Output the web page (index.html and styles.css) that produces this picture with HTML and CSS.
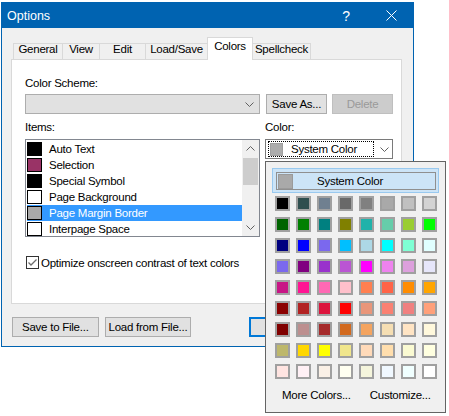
FILE: index.html
```html
<!DOCTYPE html>
<html>
<head>
<meta charset="utf-8">
<link rel="stylesheet" href="styles.css">
</head>
<body>
<div class="window">
  <div class="titlebar">
    <span class="title">Options</span>
    <span class="help">?</span>
    <svg class="close" width="11" height="11" viewBox="0 0 11 11"><path d="M0.5 0.5 L10.5 10.5 M10.5 0.5 L0.5 10.5" stroke="#fff" stroke-width="1" fill="none"/></svg>
  </div>
  <div class="client">
    <div class="tabs">
      <div class="tab tab-general">General</div>
      <div class="tab tab-view">View</div>
      <div class="tab tab-edit">Edit</div>
      <div class="tab tab-load">Load/Save</div>
      <div class="tab tab-colors selected">Colors</div>
      <div class="tab tab-spell">Spellcheck</div>
    </div>
    <div class="panel">
      <div class="lbl">Color Scheme:</div>
      <div class="scheme-row">
        <div class="combo"><svg class="chev" width="9" height="5" viewBox="0 0 9 5"><path d="M0.5 0.5 L4.5 4.5 L8.5 0.5" stroke="#606060" fill="none"/></svg></div>
        <div class="btn btn-saveas">Save As...</div>
        <div class="btn btn-disabled">Delete</div>
      </div>
      <div class="items-row">
        <div class="items-col">
          <div class="lbl">Items:</div>
          <div class="listbox">
            <div class="list">
              <div class="row"><span class="sw sw-black"></span><span>Auto Text</span></div>
              <div class="row"><span class="sw sw-sel"></span><span>Selection</span></div>
              <div class="row"><span class="sw sw-black"></span><span>Special Symbol</span></div>
              <div class="row"><span class="sw sw-white"></span><span>Page Background</span></div>
              <div class="row row-selected"><span class="sw sw-gray"></span><span>Page Margin Border</span></div>
              <div class="row"><span class="sw sw-white"></span><span>Interpage Space</span></div>
            </div>
            <div class="vscroll">
              <div class="arrow"><svg width="9" height="5" viewBox="0 0 9 5"><path d="M0.5 4.5 L4.5 0.5 L8.5 4.5" stroke="#606060" fill="none"/></svg></div>
              <div class="track"><div class="thumb"></div></div>
              <div class="arrow"><svg width="9" height="5" viewBox="0 0 9 5"><path d="M0.5 0.5 L4.5 4.5 L8.5 0.5" stroke="#606060" fill="none"/></svg></div>
            </div>
          </div>
        </div>
        <div class="color-col">
          <div class="lbl">Color:</div>
          <div class="color-combo">
            <div class="focus"><span class="csw"></span><span>System Color</span></div>
            <svg class="chev2" width="9" height="5" viewBox="0 0 9 5"><path d="M0.5 0.5 L4.5 4.5 L8.5 0.5" stroke="#606060" fill="none"/></svg>
          </div>
        </div>
      </div>
      <div class="check">
        <span class="box"><svg width="11" height="11" viewBox="0 0 11 11"><path d="M1.5 5.5 L4 8 L9.5 2.5" stroke="#6d6d6d" stroke-width="1.3" fill="none"/></svg></span>
        <span>Optimize onscreen contrast of text colors</span>
      </div>
    </div>
    <div class="footer">
      <div class="btn fbtn">Save to File...</div>
      <div class="btn fbtn fbtn2">Load from File...</div>
      <div class="btn fbtn ok">OK</div>
      <div class="btn fbtn cancel">Cancel</div>
    </div>
  </div>
</div>

<div class="popup">
  <div class="syscolor">
    <div class="syscolor-inner"><span class="psw"></span><span class="systext">System Color</span></div>
  </div>
  <div class="grid">
    <span class="c" style="background:#000000"></span>
    <span class="c" style="background:#2f4f4f"></span>
    <span class="c" style="background:#708090"></span>
    <span class="c" style="background:#696969"></span>
    <span class="c" style="background:#808080"></span>
    <span class="c" style="background:#a9a9a9"></span>
    <span class="c" style="background:#c0c0c0"></span>
    <span class="c" style="background:#d3d3d3"></span>

    <span class="c" style="background:#006400"></span>
    <span class="c" style="background:#008000"></span>
    <span class="c" style="background:#008080"></span>
    <span class="c" style="background:#808000"></span>
    <span class="c" style="background:#20b2aa"></span>
    <span class="c" style="background:#66cdaa"></span>
    <span class="c" style="background:#9acd32"></span>
    <span class="c" style="background:#00ff00"></span>

    <span class="c" style="background:#000080"></span>
    <span class="c" style="background:#0000ff"></span>
    <span class="c" style="background:#7b68ee"></span>
    <span class="c" style="background:#00bfff"></span>
    <span class="c" style="background:#add8e6"></span>
    <span class="c" style="background:#00ffff"></span>
    <span class="c" style="background:#7fffd4"></span>
    <span class="c" style="background:#e0ffff"></span>

    <span class="c" style="background:#7b68ee"></span>
    <span class="c" style="background:#800080"></span>
    <span class="c" style="background:#9932cc"></span>
    <span class="c" style="background:#ba55d3"></span>
    <span class="c" style="background:#ff00ff"></span>
    <span class="c" style="background:#ee82ee"></span>
    <span class="c" style="background:#dda0dd"></span>
    <span class="c" style="background:#e6e6fa"></span>

    <span class="c" style="background:#c71585"></span>
    <span class="c" style="background:#ff1493"></span>
    <span class="c" style="background:#ff69b4"></span>
    <span class="c" style="background:#ffc0cb"></span>
    <span class="c" style="background:#ff7f50"></span>
    <span class="c" style="background:#ff6347"></span>
    <span class="c" style="background:#ff8c00"></span>
    <span class="c" style="background:#ffa500"></span>

    <span class="c" style="background:#8b0000"></span>
    <span class="c" style="background:#b22222"></span>
    <span class="c" style="background:#dc143c"></span>
    <span class="c" style="background:#ff0000"></span>
    <span class="c" style="background:#e9967a"></span>
    <span class="c" style="background:#fa8072"></span>
    <span class="c" style="background:#f08080"></span>
    <span class="c" style="background:#ffa07a"></span>

    <span class="c" style="background:#800000"></span>
    <span class="c" style="background:#bc8f8f"></span>
    <span class="c" style="background:#a52a2a"></span>
    <span class="c" style="background:#d2691e"></span>
    <span class="c" style="background:#f4a460"></span>
    <span class="c" style="background:#f5deb3"></span>
    <span class="c" style="background:#ffe4c4"></span>
    <span class="c" style="background:#fff8dc"></span>

    <span class="c" style="background:#bdb76b"></span>
    <span class="c" style="background:#ffd700"></span>
    <span class="c" style="background:#ffff00"></span>
    <span class="c" style="background:#f0e68c"></span>
    <span class="c" style="background:#ffdab9"></span>
    <span class="c" style="background:#ffdead"></span>
    <span class="c" style="background:#fafad2"></span>
    <span class="c" style="background:#ffffe0"></span>

    <span class="c" style="background:#ffe4e1"></span>
    <span class="c" style="background:#fff0f5"></span>
    <span class="c" style="background:#faf0e6"></span>
    <span class="c" style="background:#fffff0"></span>
    <span class="c" style="background:#f5f5dc"></span>
    <span class="c" style="background:#f0f8ff"></span>
    <span class="c" style="background:#f0ffff"></span>
    <span class="c" style="background:#ffffff"></span>
  </div>
  <div class="links">
    <span class="more">More Colors...</span>
    <span class="custom">Customize...</span>
  </div>
</div>
</body>
</html>
```

FILE: styles.css
```css
* { box-sizing: border-box; }
html, body { margin: 0; padding: 0; background: #fff; }
body {
  position: relative;
  width: 449px;
  height: 416px;
  overflow: hidden;
  font-family: "Liberation Sans", Arial, sans-serif;
  font-size: 11.5px;
  letter-spacing: -0.25px;
  color: #000;
  white-space: nowrap;
}

.window {
  margin: 2px 0 0 1px;
  width: 413px;
  height: 345px;
  border: 1px solid #0063b1;
  background: #f0f0f0;
  display: flex;
  flex-direction: column;
}

.titlebar {
  height: 25px;
  flex: none;
  background: #0063b1;
  color: #fff;
  display: flex;
  align-items: center;
  padding-left: 5px;
}
.title { flex: 1; font-size: 12.5px; letter-spacing: 0; }
.help { width: 20px; text-align: center; font-size: 14px; margin-right: 30px; }
.close { margin-right: 16px; }

.client { flex: 1; padding: 9px 10px 0 9px; }

.tabs {
  display: flex;
  align-items: flex-end;
  height: 22px;
  padding-left: 2px;
  position: relative;
  z-index: 1;
}
.tab {
  height: 16px;
  border: 1px solid #d9d9d9;
  border-bottom: none;
  background: #f0f0f0;
  text-align: center;
  line-height: 11px;
  margin-right: -1px;
}
.tab-general { width: 50px; }
.tab-view { width: 38px; }
.tab-edit { width: 47px; }
.tab-load { width: 63px; }
.tab-colors { width: 46px; }
.tab-spell { width: 59px; }
.tab.selected {
  height: 23px;
  margin-bottom: -1px;
  background: #fff;
  line-height: 16px;
}

.panel {
  width: 391px;
  height: 245px;
  border: 1px solid #d9d9d9;
  background: #fff;
  padding: 16px 0 0 13px;
}

.lbl { height: 15px; line-height: 15px; }

.scheme-row { display: flex; margin-top: 3px; height: 20px; }
.combo {
  width: 235px;
  height: 20px;
  background: #e1e1e1;
  border: 1px solid #adadad;
  display: flex;
  align-items: center;
  justify-content: flex-end;
  padding-right: 5px;
}
.btn {
  height: 20px;
  background: #e1e1e1;
  border: 1px solid #adadad;
  display: flex;
  align-items: center;
  justify-content: center;
}
.btn-saveas { width: 61px; margin-left: 6px; }
.btn-disabled {
  width: 61px;
  margin-left: 5px;
  background: #cccccc;
  border-color: #bfbfbf;
  color: #9a9a9a;
}

.items-row {
  display: grid;
  grid-template-columns: 235px 128px;
  column-gap: 5px;
  margin-top: 6px;
}
.items-col .listbox { margin-top: 4px; }
.listbox {
  height: 98px;
  border: 1px solid #828790;
  background: #fff;
  display: flex;
}
.list { flex: 1; padding: 1px 0 0 1px; }
.row {
  height: 16px;
  display: flex;
  align-items: center;
}
.row-selected { background: #3399ff; color: #fff; }
.sw {
  width: 15px;
  height: 14px;
  border: 1px solid #000;
  margin-right: 7px;
}
.sw-black { background: #000; }
.sw-sel { background: #993366; }
.sw-white { background: #fff; }
.sw-gray { background: #a9a9a9; border-color: #000; }

.vscroll {
  width: 17px;
  background: #f0f0f0;
  display: flex;
  flex-direction: column;
}
.arrow {
  height: 17px;
  display: flex;
  align-items: center;
  justify-content: center;
}
.track { flex: 1; padding: 1px 1px 0 1px; }
.thumb { height: 27px; background: #cdcdcd; }

.color-col .color-combo { margin-top: 4px; }
.color-combo {
  height: 20px;
  border: 1px solid #7a7a7a;
  background: #fff;
  display: flex;
  align-items: center;
  padding-left: 2px;
}
.focus {
  width: 106px;
  height: 16px;
  border: 1px dotted #000;
  display: flex;
  align-items: center;
  padding-left: 1px;
}
.csw {
  width: 13px;
  height: 13px;
  background: #acacac;
  border: 1px solid #a0a0a0;
  margin-right: 8px;
}
.chev2 { margin-left: 6px; }

.check {
  display: flex;
  align-items: center;
  margin-top: 19px;
  height: 13px;
}
.box {
  width: 13px;
  height: 13px;
  border: 1px solid #333;
  margin-left: 1px;
  margin-right: 2px;
  display: flex;
  align-items: center;
  justify-content: center;
  background: #fff;
}

.footer {
  display: flex;
  margin-top: 13px;
  padding-left: 1px;
}
.fbtn { width: 88px; }
.fbtn2 { margin-left: 6px; }
.ok {
  margin-left: 58px;
  width: 75px;
  border: 2px solid #0078d7;
}
.cancel { margin-left: 6px; width: 75px; }

.popup {
  position: absolute;
  left: 265px;
  top: 161px;
  width: 181px;
  height: 252px;
  border: 1px solid #646464;
  background: #f0f0f0;
  padding: 6px 0 0 6px;
}
.syscolor {
  width: 167px;
  height: 25px;
  border: 1px solid #99c9ef;
  background: #cce4f7;
  padding: 3px 2px 3px 3px;
}
.syscolor-inner {
  height: 18px;
  border: 1px solid #8f8f8f;
  display: flex;
  align-items: center;
  padding-left: 1px;
}
.psw {
  width: 15px;
  height: 15px;
  background: #a9a9a9;
  border: 1px solid #9a9a9a;
}
.systext { margin-left: 24px; }

.grid {
  display: grid;
  grid-template-columns: repeat(8, 15px);
  grid-auto-rows: 15px;
  gap: 6px;
  margin: 3px 0 0 3px;
}
.c { display: block; border: 2px solid #a0a0a0; }

.links {
  display: flex;
  margin-top: 9px;
  padding-left: 10px;
  line-height: 15px;
}
.custom { margin-left: 19px; }
```
